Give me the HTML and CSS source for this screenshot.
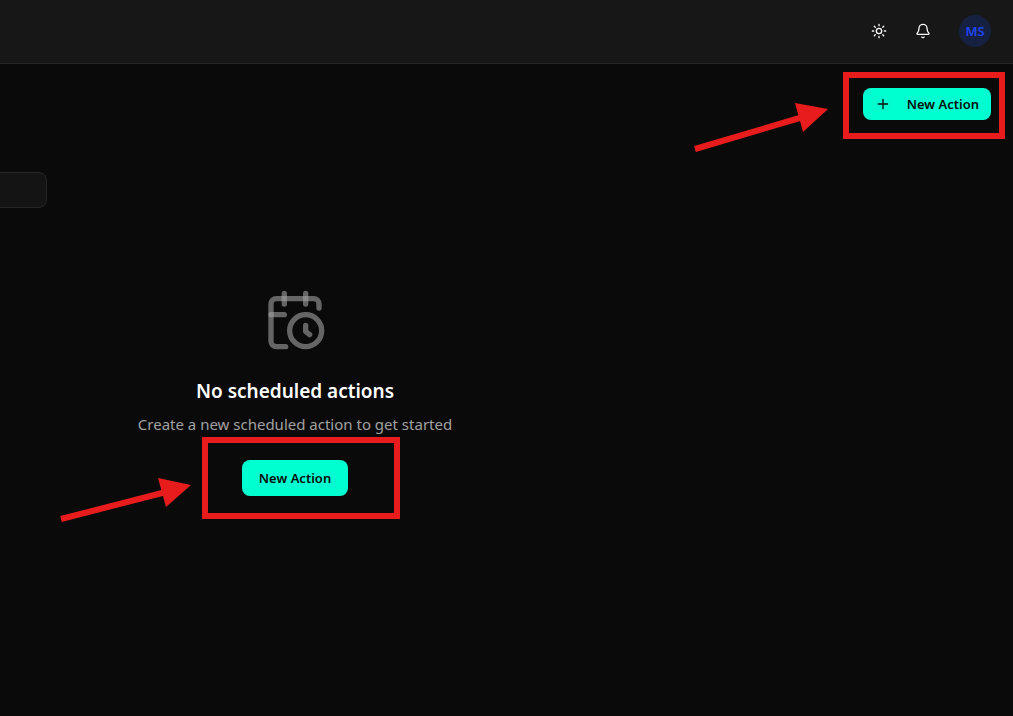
FILE: index.html
```html
<!DOCTYPE html>
<html lang="en">
	<head>
		<meta charset="UTF-8" />
		<meta name="viewport" content="width=device-width, initial-scale=1.0" />
		<title>Scheduled Actions</title>
		<link rel="stylesheet" href="styles.css">
	</head>

	<body>
		<header class="topbar">
			<button class="icon-button" type="button" aria-label="Toggle theme">
				<svg class="icon" viewBox="0 0 24 24">
					<circle cx="12" cy="12" r="4" />
					<path d="M12 2v2M12 20v2M4.93 4.93l1.41 1.41M17.66 17.66l1.41 1.41M2 12h2M20 12h2M6.34 17.66l-1.41 1.41M19.07 4.93l-1.41 1.41" />
				</svg>
			</button>
			<button class="icon-button" type="button" aria-label="Notifications">
				<svg class="icon" viewBox="0 0 24 24">
					<path d="M3.262 15.326A1 1 0 0 0 4 17h16a1 1 0 0 0 .74-1.673C19.41 13.956 18 12.499 18 8A6 6 0 0 0 6 8c0 4.499-1.411 5.956-2.738 7.326" />
					<path d="M10.268 21a2 2 0 0 0 3.464 0" />
				</svg>
			</button>
			<button class="avatar" type="button">MS</button>
		</header>

		<main class="page">
			<div class="content">
				<div class="toolbar">
					<div class="callout callout-top">
						<button class="button button-small" type="button">
							<svg class="icon" viewBox="0 0 24 24">
								<path d="M5 12h14M12 5v14" />
							</svg>
							New Action
						</button>
						<svg class="arrow" viewBox="0 0 140 55" width="140" height="55">
							<path class="arrow-line" d="M5 49 L113 17" />
							<path class="arrow-head" d="M105 3 L138 9 L113 32 Z" />
						</svg>
					</div>
				</div>

				<input class="search" type="search" aria-label="Search actions" />

				<section class="empty">
					<!-- Calendar with clock -->
					<svg class="empty-icon" viewBox="0 0 24 24">
						<path d="M21 7.5V6a2 2 0 0 0-2-2H5a2 2 0 0 0-2 2v14a2 2 0 0 0 2 2h3.5" />
						<path d="M16 2v4" />
						<path d="M8 2v4" />
						<path d="M3 10h5" />
						<path d="M17.5 17.5 16 16.3V14" />
						<circle cx="16" cy="16" r="6" />
					</svg>
					<h2 class="empty-title">No scheduled actions</h2>
					<p class="empty-text">Create a new scheduled action to get started</p>
					<div class="callout callout-empty">
						<button class="button" type="button">New Action</button>
						<svg class="arrow" viewBox="0 0 136 50" width="136" height="50">
							<path class="arrow-line" d="M4 44 L109 17" />
							<path class="arrow-head" d="M101 3 L134 10 L109 32 Z" />
						</svg>
					</div>
				</section>
			</div>
		</main>
	</body>
</html>
```
FILE: styles.css
```css
* {
	box-sizing: border-box;
}

body {
	margin: 0;
	min-height: 100vh;
	background: #0a0a0a;
	color: #fff;
	font-family: "Segoe UI", "Noto Sans", sans-serif;
	font-size: 15px;
}

button {
	border: 0;
	font-family: inherit;
	cursor: pointer;
}

.icon {
	width: 16px;
	height: 16px;
	fill: none;
	stroke: currentColor;
	stroke-width: 2;
	stroke-linecap: round;
	stroke-linejoin: round;
}

/* Top bar */
.topbar {
	display: flex;
	justify-content: flex-end;
	align-items: center;
	gap: 8px;
	height: 64px;
	padding: 0 22px 2px;
	background: #171717;
	border-bottom: 1px solid #262626;
}

.icon-button {
	display: flex;
	justify-content: center;
	align-items: center;
	width: 36px;
	height: 36px;
	padding: 0;
	background: none;
	color: #fafafa;
}

.avatar {
	width: 32px;
	height: 32px;
	margin-left: 10px;
	padding: 0;
	border-radius: 50%;
	background: #162040;
	color: #1d45f5;
	font-size: 13px;
	font-weight: 600;
}

/* Page: the left part of the content runs off the window */
.page {
	overflow: hidden;
}

.content {
	margin-left: -401px;
	padding: 24px 22px 24px 0;
}

.toolbar {
	display: flex;
	justify-content: flex-end;
	align-items: flex-start;
	height: 60px;
	margin-bottom: 24px;
}

.button {
	display: flex;
	justify-content: center;
	align-items: center;
	min-width: 106px;
	height: 36px;
	padding: 0 16px;
	border-radius: 8px;
	background: #00ffd0;
	color: #0a0a0a;
	font-size: 13px;
	font-weight: 600;
}

.button-small {
	justify-content: space-between;
	min-width: 128px;
	height: 32px;
	padding: 0 12px;
}

.search {
	display: block;
	width: 448px;
	height: 36px;
	padding: 0 12px;
	border: 1px solid #262626;
	border-radius: 8px;
	background: #141414;
	color: #fff;
	font: inherit;
}

/* Empty state */
.empty {
	display: flex;
	flex-direction: column;
	align-items: center;
	padding: 80px 0;
}

.empty-icon {
	width: 64px;
	height: 64px;
	margin-bottom: 24px;
	fill: none;
	stroke: rgba(161, 161, 161, 0.6);
	stroke-width: 2;
	stroke-linecap: round;
	stroke-linejoin: round;
}

.empty-title {
	margin: 0 0 6px;
	font-size: 19px;
	font-weight: 600;
	line-height: 30px;
}

.empty-text {
	margin: 0 0 24px;
	color: #a1a1a1;
	line-height: 24px;
}

/* Red frames and arrows round the buttons */
.callout {
	position: relative;
}

.callout::after {
	content: "";
	position: absolute;
	border: 6px solid #e81c1c;
	pointer-events: none;
}

.callout-top::after {
	inset: -16px -14px -19px -20px;
}

.callout-empty::after {
	inset: -23px -52px -23px -40px;
}

.arrow {
	position: absolute;
	pointer-events: none;
}

.callout-top .arrow {
	top: 12px;
	right: 161px;
}

.callout-empty .arrow {
	top: 15px;
	right: 155px;
}

.arrow-line {
	stroke: #e81c1c;
	stroke-width: 6;
}

.arrow-head {
	fill: #e81c1c;
}
```
